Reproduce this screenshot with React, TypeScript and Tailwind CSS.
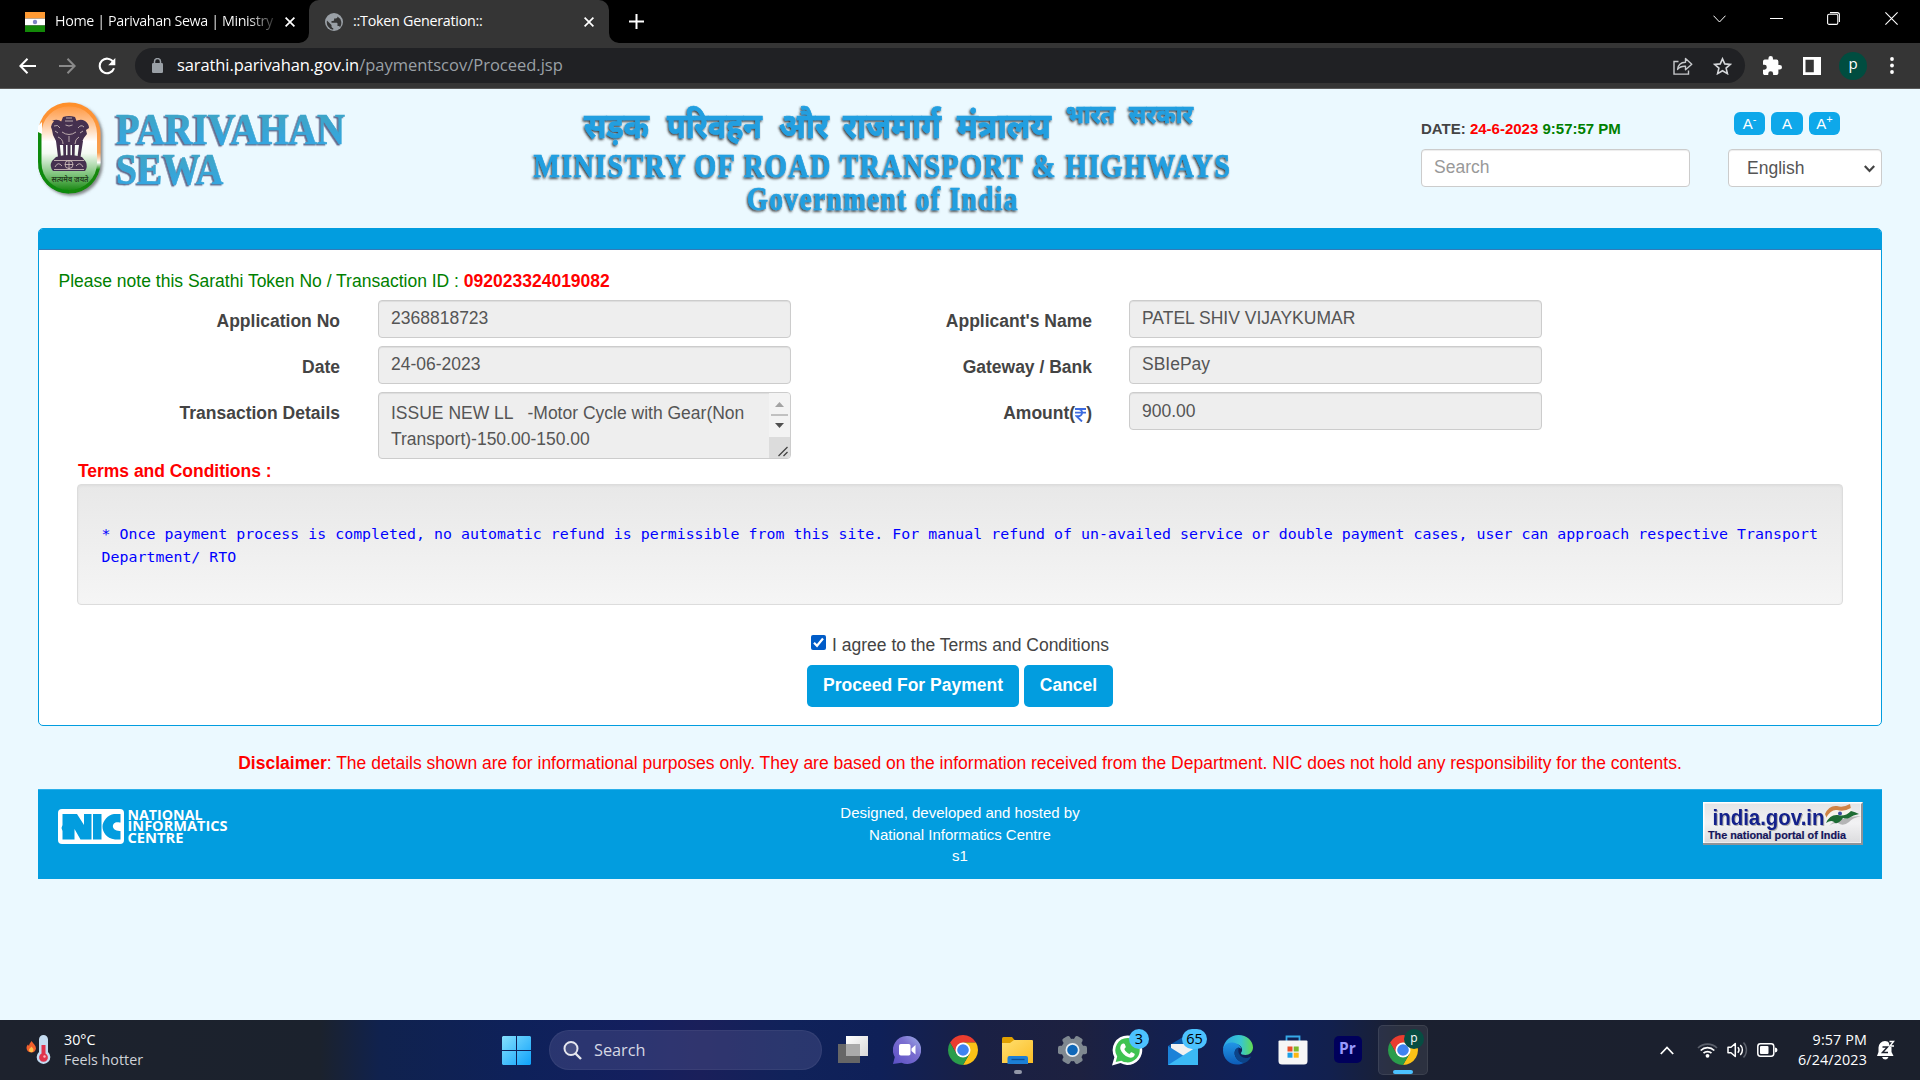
import type { ReactNode } from "react";

/* ---------- browser chrome ---------- */

function CloseX({ className = "" }: { className?: string }) {
  return (
    <svg className={className} width="10" height="10" viewBox="0 0 10 10" stroke="#fff" strokeWidth="1.7" fill="none">
      <path d="M.6.6 9.4 9.4M9.4.6.6 9.4" />
    </svg>
  );
}

function TabStrip() {
  return (
    <div className="flex h-[43px] w-full shrink-0 bg-black font-['Open_Sans',sans-serif] text-[14.3px] text-white">
      <div className="flex w-[309px] items-center pl-[25px]">
        <svg width="20" height="20" viewBox="0 0 20 20">
          <path fill="#ff9a33" d="M0 0h20v6.5H0z" />
          <path fill="#fff" d="M0 6.5h20v7H0z" />
          <path fill="#138808" d="M0 13.5h20V20H0z" />
          <circle cx="10" cy="10" r="2.2" fill="#7f83c4" />
        </svg>
        <span className="mb-[2px] ml-[10px] w-[219px] overflow-hidden bg-gradient-to-r from-white from-88% to-[#333] bg-clip-text tracking-[-0.38px] whitespace-nowrap text-transparent">
          Home | Parivahan Sewa | Ministry
        </span>
        <CloseX className="ml-[11px]" />
      </div>
      <div className="relative flex w-[300px] items-center rounded-t-[10px] bg-[#353535] pl-[16px]">
        <svg className="absolute bottom-0 -left-[10px]" width="10" height="10" viewBox="0 0 10 10">
          <path fill="#353535" d="M10 0v10H0A10 10 0 0 0 10 0z" />
        </svg>
        <svg className="absolute -right-[10px] bottom-0" width="10" height="10" viewBox="0 0 10 10">
          <path fill="#353535" d="M0 0v10h10A10 10 0 0 1 0 0z" />
        </svg>
        <svg width="18" height="18" viewBox="0 0 18 18">
          <circle cx="9" cy="9" r="9" fill="#9aa0a6" />
          <path
            fill="#353535"
            d="M2 7.5 6.5 12v1.2c0 .9.8 1.8 1.7 1.8v1.7A7.5 7.5 0 0 1 2 7.5zM15 14.3c-.2-.7-.9-1.2-1.6-1.2h-.9v-2.5c0-.5-.4-.9-.9-.9H6.5V8h1.7c.5 0 .9-.4.9-.9V5.500h1.700c.9 0 1.700-.8 1.700-1.700v-.4A7.600 7.600 0 0 1 15 14.300z"
          />
        </svg>
        <span className="mb-[2px] ml-[10px] tracking-[-0.25px] whitespace-nowrap">::Token Generation::</span>
        <CloseX className="ml-[101px]" />
      </div>
      <div className="flex flex-1 items-center pl-[20px]">
        <svg width="15" height="15" viewBox="0 0 15 15" stroke="#fff" strokeWidth="2">
          <path d="M7.500 0v15M0 7.500h15" />
        </svg>
      </div>
      <div className="flex h-[37px] items-center pr-[22px]">
        <svg width="13" height="8" viewBox="0 0 13 8" fill="none" stroke="#fff" strokeWidth="1">
          <path d="m.5.7 6 6.300 6-6.300" />
        </svg>
        <svg className="ml-[44px]" width="13" height="13" viewBox="0 0 13 13" stroke="#fff">
          <path d="M0 6.500h13" />
        </svg>
        <svg className="ml-[44px]" width="13" height="13" viewBox="0 0 13 13" fill="none" stroke="#fff" strokeWidth="1.100">
          <rect x=".6" y="2.200" width="10.200" height="10.200" rx="1.500" />
          <path d="M3 .600h7.200a2.200 2.200 0 0 1 2.200 2.200V10" />
        </svg>
        <svg className="ml-[45px]" width="13" height="13" viewBox="0 0 13 13" stroke="#fff" strokeWidth="1.100">
          <path d="M.4.4 12.600 12.600M12.600.4.4 12.600" />
        </svg>
      </div>
    </div>
  );
}

function Toolbar() {
  return (
    <div className="flex h-[46px] w-full shrink-0 items-center border-b border-[#5a5a5a] bg-[#353535] pr-[24px] pl-[19px] font-['Open_Sans',sans-serif]">
      <svg width="17" height="16" viewBox="0 0 17 16" fill="none" stroke="#fff" strokeWidth="2">
        <path d="M17 8H2M8.500.8 1.400 8l7.100 7.200" />
      </svg>
      <svg className="ml-[23px]" width="17" height="16" viewBox="0 0 17 16" fill="none" stroke="#8a8a8a" strokeWidth="2">
        <path d="M0 8h15M8.500.8 15.600 8l-7.100 7.200" />
      </svg>
      <svg className="ml-[22px]" width="18" height="18" viewBox="0 0 18 18" fill="none" stroke="#fff" strokeWidth="2.100">
        <path d="M15.200 5A7.300 7.300 0 1 0 16 11.200" />
        <path d="M17.300 1v7.200H10.200z" fill="#fff" stroke="none" />
      </svg>
      <div className="ml-[19px] flex h-[35px] w-[1610px] shrink-0 items-center rounded-full bg-[#202124] pr-[13px] pl-[17px]">
        <svg width="11" height="15" viewBox="0 0 11 15">
          <rect y="5" width="11" height="10" rx="1.300" fill="#9aa0a6" />
          <path d="M2.500 6V3.600a3 3 0 0 1 6 0V6" fill="none" stroke="#9aa0a6" strokeWidth="1.500" />
        </svg>
        <span className="ml-[14px] text-[16.5px] tracking-[-0.1px] whitespace-nowrap text-white">
          sarathi.parivahan.gov.in<span className="tracking-normal text-[#9aa0a6]">/paymentscov/Proceed.jsp</span>
        </span>
        <svg className="ml-auto" width="20" height="18" viewBox="0 0 20 18" fill="none" stroke="#c7c9cc" strokeWidth="1.400">
          <path d="M5.500 4.500H1v12.600h14.500V13.500" />
          <path d="M4.600 12.400c.4-4.700 3.200-7 7.900-7.200V1.500l6.300 5.700-6.300 5.600V9.300c-3.700-.2-6 .7-7.900 3.100z" strokeLinejoin="round" />
        </svg>
        <svg className="ml-[20px]" width="19" height="18" viewBox="0 0 19 18" fill="none" stroke="#d5d7da" strokeWidth="1.600">
          <path d="m9.500 1.800 2.300 5.100 5.500.5-4.200 3.700 1.300 5.500-4.900-2.900-4.900 2.900 1.300-5.500L1.700 7.400l5.500-.5z" />
        </svg>
      </div>
      <svg className="ml-[18px] shrink-0" width="19" height="19" viewBox="2 1 21 21" fill="#fff">
        <path d="M20.500 11H19V7a2 2 0 0 0-2-2h-4V3.500a2.500 2.500 0 0 0-5 0V5H4a2 2 0 0 0-2 2v3.800h1.500a2.700 2.700 0 0 1 0 5.400H2V20c0 1.100.9 2 2 2h3.800v-1.500a2.700 2.700 0 0 1 5.400 0V22H17a2 2 0 0 0 2-2v-4h1.500a2.500 2.500 0 0 0 0-5z" />
      </svg>
      <svg className="ml-[21px] shrink-0" width="18" height="18" viewBox="0 0 18 18">
        <path fill="#fff" fillRule="evenodd" d="M0 0h18v18H0zM2.500 2.700v12.600h8.300V2.700z" />
      </svg>
      <div className="ml-[18px] flex h-[28px] w-[28px] shrink-0 items-center justify-center rounded-full bg-[#004d40] pb-[4px] text-[15px] leading-none text-white">p</div>
      <svg className="ml-[23px] shrink-0" width="4" height="17" viewBox="0 0 4 17" fill="#fff">
        <circle cx="2" cy="2" r="1.900" />
        <circle cx="2" cy="8.500" r="1.900" />
        <circle cx="2" cy="15" r="1.900" />
      </svg>
    </div>
  );
}

/* ---------- page header ---------- */

function ParivahanLogo() {
  return (
    <svg className="mt-[9px] shrink-0" width="320" height="104" viewBox="38 98 320 104">
      <defs>
        <linearGradient id="ring" x1="0" y1="0" x2="0" y2="1">
          <stop offset="0" stopColor="#ff8f2a" />
          <stop offset=".55" stopColor="#f9a052" />
          <stop offset=".66" stopColor="#fff" />
          <stop offset=".74" stopColor="#138808" />
          <stop offset="1" stopColor="#138808" />
        </linearGradient>
        <linearGradient id="fill" x1="0" y1="0" x2="0" y2="1">
          <stop offset="0" stopColor="#ff9a45" />
          <stop offset=".2" stopColor="#ffc595" />
          <stop offset=".42" stopColor="#fff" />
          <stop offset=".56" stopColor="#f4faf3" />
          <stop offset=".82" stopColor="#7cc279" />
          <stop offset="1" stopColor="#1d8a17" />
        </linearGradient>
        <linearGradient id="word" x1="0" y1="0" x2="0" y2="1">
          <stop offset=".2" stopColor="#3fa5c4" />
          <stop offset=".8" stopColor="#34a6e2" />
        </linearGradient>
        <filter id="soft" x="-20%" y="-20%" width="150%" height="150%">
          <feDropShadow dx="2" dy="2" stdDeviation="1.500" floodColor="#555" floodOpacity=".7" />
        </filter>
        <filter id="edge" x="-5%" y="-20%" width="110%" height="150%">
          <feDropShadow dx="-1.700" dy="1.300" stdDeviation=".5" floodColor="#5b6486" floodOpacity=".95" />
        </filter>
      </defs>
      <g filter="url(#soft)">
        <rect x="38" y="102.500" width="62.500" height="91" rx="31" fill="url(#ring)" />
        <path d="M38 132v30a31 31 0 0 0 31 31.500l-1-5c-15 0-26-10-26-24v-32z" fill="#0f8a10" />
        <rect x="41.500" y="106.500" width="55.500" height="83.500" rx="27" fill="url(#fill)" />
        <path d="M38 126v6l4 2V122z" fill="#fff" />
      </g>
      <g fill="#45304f">
        <path d="M63 117q6-2 12 0l2 5-1 9q-7 4-14 0l-1-9z" />
        <path d="M52 121q5-3 10 1l2 9 9 0 2-9q5-4 10-1 4 3 4 7l-3 2 1 4q-3 3-5 8l-2 3H59l-3-4-3-6-1-5-1-3q1-4 3-6z" />
        <path d="M56 141h3.500l1.500 16h-3zM63 143h3v15h-2.500zM72 143h3l-.5 15H72zM79.500 141H83l-2.500 16h-3zM67.500 143h3v14h-3z" />
        <path d="M56 157q12-4 26 0l4 5q2 5-1 9H53q-4-5-1-10z" />
      </g>
      <g fill="none" stroke="#d9c9c4" strokeWidth=".8">
        <path d="M65 121h8M65.500 125q3.500 2 7 0M54 126q4-2 6 2M78 128q3-4 6-1M62 132q7 5 14 0M58 137q5 2 5 7M79 137q-4 2-4 7M69 136v6M55 131l3 2M83 131l-3 2M66 118l6 0" />
        <circle cx="69" cy="164.500" r="4" />
        <path d="M69 161v8M65 164.500h8M55 167q3-6 7-1M76 166q4-5 7 1M54 160.500h30M54 169.500h30" />
      </g>
      <text x="51.500" y="182" textLength="37" lengthAdjust="spacingAndGlyphs" fontSize="8.500" fontFamily="Noto Sans Devanagari, Noto Sans, sans-serif" fontWeight="600" fill="#24401f">
        सत्यमेव जयते
      </text>
      <g fontFamily="Liberation Serif, serif" fontWeight="700" fontSize="44.500" fill="url(#word)" stroke="#38a5d2" strokeWidth=".6" filter="url(#edge)">
        <text x="116" y="143.500" textLength="229" lengthAdjust="spacingAndGlyphs">PARIVAHAN</text>
        <text x="116" y="184" textLength="107.500" lengthAdjust="spacingAndGlyphs">SEWA</text>
      </g>
    </svg>
  );
}

const hindiWords: [string, number, number][] = [
  ["सड़क", 584, 65],
  ["परिवहन", 667, 95],
  ["और", 779, 50],
  ["राजमार्ग", 843, 98],
  ["मंत्रालय", 957, 94],
];

function MinistryTitle() {
  return (
    <svg className="mt-[9px] ml-[165px] shrink-0" width="720" height="124" viewBox="523 98 720 124">
      <defs>
        <filter id="cut" x="-5%" y="-10%" width="110%" height="125%">
          <feDropShadow dx="-1" dy="1.500" stdDeviation=".8" floodColor="#222" floodOpacity=".9" />
        </filter>
      </defs>
      <g fill="#219fe0" stroke="#219fe0" strokeWidth=".7" filter="url(#cut)" fontWeight="700">
        <g fontFamily="Noto Sans Devanagari, Noto Sans, sans-serif" fontSize="35">
          {hindiWords.map(([w, x, len]) => (
            <text key={w} x={x} y="138" textLength={len} lengthAdjust="spacingAndGlyphs">{w}</text>
          ))}
          <text x="1066" y="122.500" fontSize="26" textLength="49" lengthAdjust="spacingAndGlyphs">भारत</text>
          <text x="1129" y="122.500" fontSize="26" textLength="64" lengthAdjust="spacingAndGlyphs">सरकार</text>
        </g>
        <g fontFamily="Liberation Serif, serif" fontSize="33.500" letterSpacing="1.800">
          <text x="533.500" y="177" textLength="698" lengthAdjust="spacingAndGlyphs">MINISTRY OF ROAD TRANSPORT &amp; HIGHWAYS</text>
          <text x="747" y="210" textLength="272" lengthAdjust="spacingAndGlyphs">Government of India</text>
        </g>
      </g>
    </svg>
  );
}

function SizeButton({ sup, width }: { sup?: string; width: string }) {
  return (
    <button className={`${width} relative flex h-[23px] items-center justify-center rounded-[6px] bg-[#0ea8ea] text-[15px] leading-none text-white`}>
      A{sup && <span className="-mt-[8px] text-[11px] leading-none">{sup}</span>}
    </button>
  );
}

function PageHeader() {
  return (
    <header className="flex h-[139px] shrink-0 pl-[38px]">
      <ParivahanLogo />
      <MinistryTitle />
      <div className="ml-[178px] w-[269px] pt-[27px]">
        <div className="h-[33px] text-[15px] leading-[25px] font-bold whitespace-nowrap text-[#444]">
          DATE: <span className="text-[#f00]">24-6-2023</span> <span className="text-[#008000]">9:57:57 PM</span>
        </div>
        <div className="h-[38px] w-[269px] rounded-[4px] border border-[#ccc] bg-white pl-[12px] text-[17.5px] leading-[34px] text-[#999] shadow-[inset_0_1px_1px_rgba(0,0,0,0.075)]">Search</div>
      </div>
      <div className="ml-[38px] w-[154px] pt-[23px]">
        <div className="flex h-[37px] gap-[6px] pl-[6px]">
          <SizeButton sup="-" width="w-[31px]" />
          <SizeButton width="w-[32px]" />
          <SizeButton sup="+" width="w-[31px]" />
        </div>
        <div className="flex h-[38px] items-center justify-between rounded-[4px] border border-[#ccc] bg-white pr-[6px] pl-[18px] text-[17.5px] text-[#555] shadow-[inset_0_1px_1px_rgba(0,0,0,0.075)]">
          English
          <svg className="mt-[2px]" width="11" height="8" viewBox="0 0 11 8" fill="none" stroke="#444" strokeWidth="2.200">
            <path d="m.8 1 4.700 5 4.700-5" />
          </svg>
        </div>
      </div>
    </header>
  );
}

/* ---------- form ---------- */

const inputCls =
  "w-[413px] rounded-[4px] border border-[#ccc] bg-[#eee] pl-[12px] text-[17.5px] text-[#555] shadow-[inset_0_1px_1px_rgba(0,0,0,0.075)]";

function Label({ children, className }: { children: ReactNode; className: string }) {
  return <div className={`${className} pt-[9px] text-right text-[17.5px] leading-[25px] font-bold text-[#444]`}>{children}</div>;
}

function Row({ l1, v1, l2, v2, h, lead = "leading-[35px]" }: { l1: string; v1: ReactNode; l2: ReactNode; v2: string; h: string; lead?: string }) {
  return (
    <div className={`${h} flex items-start`}>
      <Label className="mr-[38px] w-[301px]">{l1}</Label>
      {typeof v1 === "string" ? <div className={`${inputCls} h-[38px] leading-[35px]`}>{v1}</div> : v1}
      <Label className="mr-[37px] w-[301px]">{l2}</Label>
      <div className={`${inputCls} h-[38px] ${lead}`}>{v2}</div>
    </div>
  );
}

function Details() {
  return (
    <div className={`${inputCls} flex h-[67px] justify-between overflow-hidden`}>
      <div className="pt-[7px] leading-[26px] whitespace-pre">{"ISSUE NEW LL   -Motor Cycle with Gear(Non\nTransport)-150.00-150.00"}</div>
      <div className="flex w-[21px] flex-col items-center bg-[#f3f3f3]">
        <svg width="21" height="44" viewBox="0 0 21 44">
          <path d="M10.500 9 15 14H6z" fill="#a3a3a3" />
          <path d="M2 21h17v2H2z" fill="#c1c1c1" />
          <path d="M10.500 35 15 30H6z" fill="#505050" />
        </svg>
        <svg className="bg-[#dcdcdc]" width="21" height="21" viewBox="0 0 21 21" stroke="#444" strokeWidth="1.300">
          <path d="m9.500 19 9-9M14.500 19l4-4" />
        </svg>
      </div>
    </div>
  );
}

function Panel() {
  return (
    <main className="mx-[38px] h-[498px] shrink-0 overflow-hidden rounded-[5px] border border-[#029ddf] bg-white">
      <div className="h-[21px] border-b border-[#337ab7] bg-[#029ddf]" />
      <div className="h-[50px] pt-[19px] pl-[19.500px] text-[17.5px] leading-[25px] text-[#008000]">
        Please note this Sarathi Token No / Transaction ID : <span className="font-bold text-[#f00]">092023324019082</span>
      </div>
      <Row h="h-[46px]" l1="Application No" v1="2368818723" l2="Applicant's Name" v2="PATEL SHIV VIJAYKUMAR" />
      <Row h="h-[46px]" l1="Date" v1="24-06-2023" l2="Gateway / Bank" v2="SBIePay" />
      <Row
        h="h-[67px]"
        lead="leading-[37px]"
        l1="Transaction Details"
        v1={<Details />}
        l2={
          <>
            Amount(
            <svg className="inline-block align-[-3px]" width="11" height="14" viewBox="0 0 11 14" fill="none" stroke="#3d6be0" strokeWidth="1.900">
              <path d="M0 1h11M0 4.600h11M1 1h2.500a3.500 3.500 0 0 1 0 7.200H1.500l5.500 5.300" />
            </svg>
            )
          </>
        }
        v2="900.00"
      />
      <div className="h-[25px] pl-[39px] text-[17.5px] leading-[25px] font-bold tracking-[-0.03px] text-[#f00]">Terms and Conditions :</div>
      <div className="mr-[38px] ml-[38px] h-[121px] rounded-[4px] border border-[#dcdcdc] bg-gradient-to-b from-[#e8e8e8] to-[#f5f5f5] pt-[38px] pl-[23.500px] font-['DejaVu_Sans_Mono',monospace] text-[14.85px] leading-[23px] tracking-[0.05px] text-[#00f] shadow-[inset_0_1px_3px_rgba(0,0,0,0.05)]">
        <div className="whitespace-nowrap">
          * Once payment process is completed, no automatic refund is permissible from this site. For manual refund of un-availed service or double payment cases, user can approach respective Transport
        </div>
        <div>Department/ RTO</div>
      </div>
      <div className="flex h-[60px] justify-center pt-[28px] text-[17.5px] leading-[25px] text-[#444]">
        <svg className="mt-[2px] mr-[6px]" width="15" height="15" viewBox="0 0 15 15">
          <rect width="15" height="15" rx="2" fill="#005cc8" />
          <path d="m3 7.800 3 3 6-7.300" fill="none" stroke="#fff" strokeWidth="2.200" />
        </svg>
        I agree to the Terms and Conditions
      </div>
      <div className="flex justify-center gap-[5px] text-[17.5px] font-bold text-white">
        <button className="h-[42px] w-[212px] rounded-[5px] bg-[#029ddf] pb-[2px]">Proceed For Payment</button>
        <button className="h-[42px] w-[89px] rounded-[5px] bg-[#029ddf] pb-[2px]">Cancel</button>
      </div>
    </main>
  );
}

/* ---------- footer ---------- */

function NicLogo() {
  return (
    <svg width="172" height="38" viewBox="0 0 172 38">
      <rect width="66" height="35" rx="4" fill="#fff" />
      <path
        fill="#029ddf"
        d="M4.500 5H19l7 11V5h7.500v25.500H22.500L16.500 20v10.500H4.500V22l-1-3 1-3zM35 5h8.500v25.500H35zM62.500 5v8.500h-1c-8-2-9.500 8 0 8.500h1v8.500H57C48 29.500 44.500 22.500 44.500 17.500S50 5.500 56 5z"
      />
      <g fill="#fff" fontFamily="Open Sans, sans-serif" fontWeight="700" fontSize="14">
        <text x="69.500" y="10.800" textLength="75" lengthAdjust="spacingAndGlyphs">NATIONAL</text>
        <text x="69.500" y="22.300" textLength="100" lengthAdjust="spacingAndGlyphs">INFORMATICS</text>
        <text x="69.500" y="33.700" textLength="56" lengthAdjust="spacingAndGlyphs">CENTRE</text>
      </g>
    </svg>
  );
}

function IndiaGovLogo() {
  return (
    <svg width="160" height="43" viewBox="0 0 160 43">
      <defs>
        <linearGradient id="plate" x1="0" y1="0" x2="0" y2="1">
          <stop offset="0" stopColor="#e4e4e6" />
          <stop offset=".5" stopColor="#f2f2f4" />
          <stop offset="1" stopColor="#dcdcde" />
        </linearGradient>
      </defs>
      <rect width="160" height="43" fill="#8f9499" />
      <path d="M0 0h160l-2 2v39H0z" fill="#fff" />
      <rect x="1.500" y="1.500" width="156" height="39" fill="url(#plate)" />
      <g fontFamily="Liberation Sans, sans-serif">
        <text x="9.500" y="23.300" fontSize="22.500" fontWeight="700" textLength="112" lengthAdjust="spacingAndGlyphs" fill="#14218c" style={{ filter: "drop-shadow(1px 1px 0.5px #aaa)" }}>india.gov.in</text>
        <text x="5" y="36.500" fontSize="10.500" fontWeight="700" textLength="138" lengthAdjust="spacingAndGlyphs" fill="#14145a" stroke="#14145a" strokeWidth=".2">The national portal of India</text>
      </g>
      <path d="M126 24q7-8 15-7 8-3 17-3-9 2-12 6-6 5-11 1-6 0-9 3z" fill="#777" opacity=".5" />
      <path d="M122 12q4-9 12-8 6 2 13-2l1 5q-6 4-13 3-7-1-11 7z" fill="#cf8245" />
      <path d="M123 16q5-9 11-8 7 2 14-2l2 6q-7 4-13 2-8 0-12 6z" fill="#f6f3ec" />
      <circle cx="137" cy="11.500" r="2" fill="#3a4aa0" />
      <path d="M123 21q4-9 12-8 7 2 13-4 4 1 8 3-6 1-10 4-3 1-6 0-4 6-8 5-3-4-9 0z" fill="#1d6b33" />
    </svg>
  );
}

function Footer() {
  return (
    <>
      <div className="h-[63px] shrink-0 pt-[25px] text-center text-[17.5px] leading-[25px] whitespace-nowrap text-[#f00]">
        <b>Disclaimer</b>: The details shown are for informational purposes only. They are based on the information received from the Department. NIC does not hold any responsibility for the contents.
      </div>
      <footer className="mx-[38px] grid h-[90px] shrink-0 grid-cols-3 border-t border-[#2bb0ea] bg-[#029ddf]">
        <div className="pt-[19px] pl-[20px]"><NicLogo /></div>
        <div className="pt-[12px] text-center text-[15px] leading-[21.500px] text-white">
          <div>Designed, developed and hosted by</div>
          <div>National Informatics Centre</div>
          <div>s1</div>
        </div>
        <div className="flex justify-end pt-[12px] pr-[19px]"><IndiaGovLogo /></div>
      </footer>
    </>
  );
}

/* ---------- taskbar ---------- */

function ChromeLogo() {
  return (
    <svg width="30" height="30" viewBox="-24 -24 48 48">
      <path fill="#ea3d2f" d="M20.780-12A24 24 0 0 0-20.780-12L-10.390 6 0 0 0-12z" />
      <path fill="#fbc116" d="M20.780-12A24 24 0 0 1 0 24L10.390 6 0 0V-12z" />
      <path fill="#2a9d4b" d="M-20.780-12A24 24 0 0 0 0 24L10.390 6 0 0-10.390 6z" />
      <circle r="12" fill="#fff" />
      <circle r="9.300" fill="#3f83f0" />
    </svg>
  );
}

function Badge({ text, className }: { text: string; className: string }) {
  return (
    <span className={`${className} absolute flex h-[20px] items-center justify-center rounded-full bg-[#4cc2ff] text-[14.500px] leading-none text-black`}>{text}</span>
  );
}

function AppSlot({ children, indicator }: { children: ReactNode; indicator?: boolean }) {
  return (
    <div className="relative flex h-[60px] w-[55px] shrink-0 items-center justify-center">
      {children}
      {indicator && <span className="absolute bottom-[6px] h-[4px] w-[8px] rounded-full bg-[#9297a8]" />}
    </div>
  );
}

function TaskApps() {
  return (
    <div className="flex items-center">
      <AppSlot>
        <svg width="30" height="28" viewBox="0 0 30 28">
          <defs>
            <linearGradient id="tv" x1="0" y1="0" x2="1" y2="1">
              <stop offset="0" stopColor="#fff" />
              <stop offset="1" stopColor="#d8d8d8" />
            </linearGradient>
          </defs>
          <path fill="url(#tv)" d="M8 0h22v20H8z" />
          <path fill="#666" d="M0 8h22v19H0z" />
          <path fill="#aaa" d="M8 8h14v12H8z" />
        </svg>
      </AppSlot>
      <AppSlot>
        <svg className="mr-[2px]" width="28" height="28" viewBox="0 0 28 28">
          <defs>
            <linearGradient id="chat" x1="0" y1="1" x2="1" y2="0">
              <stop offset="0" stopColor="#5a4fc4" />
              <stop offset=".6" stopColor="#7b6fd0" />
              <stop offset="1" stopColor="#9fb2e8" />
            </linearGradient>
          </defs>
          <path fill="url(#chat)" d="M14 0a14 14 0 1 1-5.500 26.800L0 28l1.800-7A14 14 0 0 1 14 0z" />
          <rect x="6" y="8" width="11.500" height="11.500" rx="1.800" fill="#fff" />
          <path d="M18.500 12.500 22.500 9v9.500l-4-3.500z" fill="#fff" />
        </svg>
      </AppSlot>
      <AppSlot><ChromeLogo /></AppSlot>
      <AppSlot indicator>
        <svg width="31" height="28" viewBox="0 0 31 28">
          <defs>
            <linearGradient id="folder" x1="0" y1="0" x2="1" y2="1">
              <stop offset="0" stopColor="#ffdf70" />
              <stop offset="1" stopColor="#fbbd25" />
            </linearGradient>
          </defs>
          <path fill="#e0a000" d="M1.500 1H10l3 3.500V10H0V2.500Q0 1 1.500 1z" />
          <path fill="url(#folder)" d="M0 7h8l4-3h18q1 0 1 1v22H0z" />
          <path fill="#1c7fd6" d="M5.500 28v-6q0-2 2-2H24q2 0 2 2v6z" />
          <path stroke="#0b4f96" strokeWidth="1.300" d="M9.500 23.500h13" />
        </svg>
      </AppSlot>
      <AppSlot>
        <svg width="31" height="30" viewBox="-15 -15 30 30">
          {[30, 90, 150].map((a) => (
            <rect key={a} x="-4.200" y="-14.500" width="8.400" height="29" rx="2" fill="#7f8890" transform={`rotate(${a})`} />
          ))}
          <circle r="11.200" fill="#7f8890" />
          <circle r="7" fill="#e8eef2" />
          <circle r="5.300" fill="#0f67b8" />
        </svg>
      </AppSlot>
      <AppSlot>
        <svg width="31" height="31" viewBox="0 0 31 31">
          <path fill="#fff" d="M15.500.5a14.700 14.700 0 1 1-7 27.600L0 30.500l2.400-8.300A14.700 14.700 0 0 1 15.500.5z" />
          <path fill="#3fc351" d="M15.500 3a12.200 12.200 0 1 1-6.200 22.700L3.700 27l1.500-5.400A12.200 12.200 0 0 1 15.500 3z" />
          <path fill="#fff" d="M11 8.500c.7-.3 1.500 0 1.800.8l.9 2.200c.2.6 0 1-1.400 2.400 1 2.300 3 4.200 5.200 5.100 1.400-1.700 1.700-1.900 2.200-1.700l2.400 1.200c.6.300.7.700.5 1.500-.8 2.600-3.600 3.200-6 2.300-4-1.400-7-4.600-8.200-8-.6-2.300.5-5.200 2.600-5.800z" />
        </svg>
        <Badge text="3" className="top-[9px] right-[6px] w-[20px]" />
      </AppSlot>
      <AppSlot>
        <svg className="mt-[2px]" width="30" height="28" viewBox="0 0 30 28">
          <path fill="#0a58a8" d="m0 9 15-9 15 9v5H0z" />
          <path fill="#f1f1f1" d="M3 7h24v9l-12 5L3 12z" />
          <path fill="#1b82d8" d="m0 9 19 12L30 28H0z" />
          <path fill="#3bb9f5" d="M30 9 0 28h30z" />
        </svg>
        <Badge text="65" className="top-[9px] right-[3px] w-[25px]" />
      </AppSlot>
      <AppSlot>
        <svg width="30" height="30" viewBox="0 0 30 30">
          <defs>
            <linearGradient id="e1" x1="0" y1="0" x2="1" y2="0">
              <stop offset="0" stopColor="#2aa5e8" />
              <stop offset=".6" stopColor="#38c6d0" />
              <stop offset="1" stopColor="#62dc50" />
            </linearGradient>
            <linearGradient id="e2" x1="0" y1="0" x2="0" y2="1">
              <stop offset="0" stopColor="#2196e6" />
              <stop offset="1" stopColor="#0d5cb8" />
            </linearGradient>
          </defs>
          <path fill="url(#e1)" d="M0 14C1 5.500 8 0 15.500 0 24 0 30 6 30 12.500c0 4.500-3.500 7.500-7.500 7.500-3 0-5-1-4.500-2 2.500-3 1-8-5-9C7 8.500 2 10.500 0 14z" />
          <path fill="url(#e2)" d="M0 15c0-5 5-8 9.500-7.500 5 .3 8.700 3.500 8.700 6.500-3-3.500-8 1-6.200 6.500 1.500 4.500 6 7.500 10.500 6.500C12 33.500 0 27 0 15z" />
          <path fill="#0c4489" d="M12 20.500c-1.500-4.500 1.500-8.500 4.200-8-2.200 3.500 0 8.500 4 10 3 1 5.500.3 8-1.300-2 5-6 7-8.700 6.500-4-1-6.500-4-7.500-7.200z" />
        </svg>
      </AppSlot>
      <AppSlot>
        <svg width="30" height="30" viewBox="0 0 30 30">
          <path d="M8.500 6V1.500h13V6" fill="none" stroke="#36a9e8" strokeWidth="1.800" />
          <path fill="#f6f6f6" d="M1.500 5.500h27q1 0 1 1V26q0 3.500-3.500 3.500H4Q.5 29.500.5 26V6.500q0-1 1-1z" />
          <path fill="#e8502a" d="M9.500 11.500h5v5h-5z" />
          <path fill="#7db92c" d="M15.700 11.500h5v5h-5z" />
          <path fill="#1a9fe6" d="M9.500 17.700h5v5h-5z" />
          <path fill="#fcb813" d="M15.700 17.700h5v5h-5z" />
        </svg>
      </AppSlot>
      <AppSlot>
        <div className="-mt-[2px] flex h-[27px] w-[28px] items-center justify-center rounded-[5px] bg-[#00005b] pb-[1px] text-[15.500px] leading-none font-bold text-[#9999ff]">Pr</div>
      </AppSlot>
      <div className="relative ml-[3px] flex h-[50px] w-[50px] items-center justify-center rounded-[5px] border border-white/8 bg-white/8">
        <ChromeLogo />
        <span className="absolute top-[3px] right-[3px] flex h-[20px] w-[20px] items-center justify-center rounded-full bg-[#064d42] pb-[2px] text-[12px] leading-none text-white">p</span>
        <span className="absolute bottom-0 h-[4px] w-[20px] rounded-full bg-[#4cc2ff]" />
      </div>
    </div>
  );
}

function Taskbar() {
  return (
    <div className="mt-auto flex h-[60px] shrink-0 items-center bg-[linear-gradient(90deg,#1d222d_0,#1b222d_320px,#10224e_380px,#0e215a_520px,#141f5e_640px,#1a1f5a_700px,#10225a_790px,#0f2058_880px,#1a2044_980px,#1d2140_1080px,#14204e_1160px,#0f2059_1260px,#12204e_1330px,#1b2030_1400px,#1b202c_100%)] font-['Open_Sans',sans-serif] text-[14.300px] text-white">
      <svg className="ml-[26px] shrink-0" width="26" height="30" viewBox="0 0 26 30">
        <path fill="#f2602c" d="M5.500 6c2 3 4.500 4.500 4.500 7.500A4.800 4.800 0 0 1 .5 13c0-2 1-3 1.500-3.500l1 1.500c.2-2 1.500-3.500 2.500-5z" />
        <path fill="#ffc04a" d="M5.500 11.500c1 1.500 2 2 2 3.500a2.200 2.200 0 0 1-4.500 0c0-1.500 1.500-2 2.500-3.500z" />
        <path fill="#c4dbf0" d="M17.500 0a4.500 4.500 0 0 1 4.500 4.500V17a6.800 6.800 0 1 1-9 0V4.500A4.500 4.500 0 0 1 17.500 0z" />
        <path fill="#e0334c" d="M15.500 10h4v8.500a4.400 4.400 0 1 1-4 0z" />
        <circle cx="18.500" cy="21.500" r="1.200" fill="#ffb3be" />
      </svg>
      <div className="ml-[12px] w-[438px] leading-[20px]">
        <div>30°C</div>
        <div className="text-[#cfd2d8]">Feels hotter</div>
      </div>
      <svg className="shrink-0" width="29" height="29" viewBox="0 0 29 29">
        <defs>
          <linearGradient id="win" x1="0" y1="0" x2="1" y2="1">
            <stop offset="0" stopColor="#85dffd" />
            <stop offset="1" stopColor="#0ea2fb" />
          </linearGradient>
        </defs>
        <path fill="url(#win)" d="M1 0h13v14H0V1zM15 0h13l1 1v13H15zM0 15h14v14H1l-1-1zM15 15h14v13l-1 1H15z" />
      </svg>
      <div className="ml-[18px] flex h-[40px] w-[273px] shrink-0 items-center rounded-full border border-white/5 bg-[#5b5f96]/35 pl-[13px] text-[16.300px] text-[#d6d8e4]">
        <svg className="mr-[12px]" width="19" height="19" viewBox="0 0 19 19" fill="none" stroke="#e6e7ee" strokeWidth="2">
          <circle cx="8" cy="7.500" r="6.500" fill="#ffffff22" />
          <path d="m12.500 12.500 5.500 5.500" strokeWidth="2.400" />
        </svg>
        Search
      </div>
      <div className="ml-[3px]"><TaskApps /></div>
      <div className="ml-auto flex shrink-0 items-center pr-[25px]">
        <svg width="14" height="9" viewBox="0 0 14 9" fill="none" stroke="#fff" strokeWidth="1.800">
          <path d="M.8 8 7 1.500 13.200 8" />
        </svg>
        <svg className="ml-[23px]" width="21" height="16" viewBox="0 0 21 16" fill="none" stroke="#fff" strokeWidth="1.700">
          <path d="M1 6a13.500 13.500 0 0 1 19 0" stroke="#5b606b" />
          <path d="M3.700 8.500a9.600 9.600 0 0 1 13.600 0M6.500 11.200a5.700 5.700 0 0 1 8 0" />
          <circle cx="10.500" cy="13.800" r="1.900" fill="#fff" stroke="none" />
        </svg>
        <svg className="ml-[9px]" width="21" height="18" viewBox="0 0 21 18" fill="none" stroke="#fff" strokeWidth="1.500">
          <path d="M1 6.200h3L8.300 2.500v13L4 11.800H1z" strokeLinejoin="round" />
          <path d="M10.800 6.300a4 4 0 0 1 0 5.400M13.300 4a7 7 0 0 1 0 10" />
          <path d="M16.500 1.500a11 11 0 0 1 0 15" stroke="#5b606b" />
        </svg>
        <svg className="ml-[9px]" width="21" height="14" viewBox="0 0 21 14">
          <rect x=".8" y=".8" width="16" height="12.400" rx="2.600" fill="none" stroke="#fff" strokeWidth="1.500" />
          <rect x="3" y="3" width="8.500" height="8" rx="1" fill="#fff" />
          <path d="M18 4.500q2.500.3 2.500 2.500T18 9.500z" fill="#fff" />
        </svg>
        <div className="ml-[20px] text-right leading-[20px]">
          <div className="tracking-[0.14px]">9:57 PM</div>
          <div className="tracking-[0.14px]">6/24/2023</div>
        </div>
        <svg className="ml-[10px]" width="18" height="20" viewBox="0 0 18 20">
          <path fill="#fff" d="M8 1a6.500 6.500 0 0 1 6.500 6.500V12l2 4H0l1.500-4V7.500A6.500 6.500 0 0 1 8 1zM5 17h6.500q-1 2.500-3.200 2.500T5 17z" />
          <path d="M5.500 7h5l-5 5.500h5.500" fill="none" stroke="#1b202c" strokeWidth="1.500" />
          <path d="M11 0h7v7h-5z" fill="#1b202c" />
          <path d="M12.500 1.500h4L13 6h4" fill="none" stroke="#fff" strokeWidth="1.400" />
        </svg>
      </div>
    </div>
  );
}

export default function App() {
  return (
    <div className="flex h-[1080px] w-[1920px] flex-col overflow-hidden bg-[#ebf9ff] font-['Liberation_Sans',Arial,sans-serif]">
      <TabStrip />
      <Toolbar />
      <PageHeader />
      <Panel />
      <Footer />
      <Taskbar />
    </div>
  );
}
